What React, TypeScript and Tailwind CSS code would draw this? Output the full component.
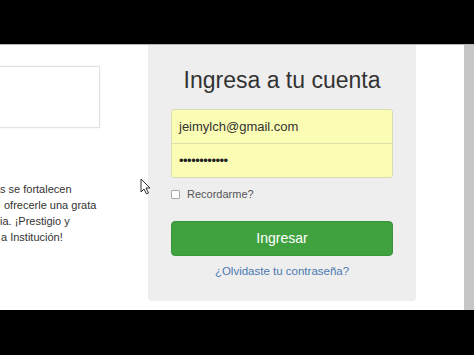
export default function App() {
  const font = { fontFamily: '"Liberation Sans", Arial, sans-serif' };
  return (
    <div className="w-[474px] h-[355px] bg-black flex flex-col overflow-hidden" style={font}>
      <div className="h-[44px] shrink-0" />
      <div className="relative h-[266px] shrink-0 bg-white border-t border-[#b5b5b5] flex">
        {/* left column, cut off by the video frame */}
        <div className="w-[148px] shrink-0 flex flex-col">
          <div className="mt-[21px] h-[62px] w-[101px] -ml-px border border-[#e2e2e2] shadow-[0_0_2px_rgba(0,0,0,0.08)]" />
          <div className="mt-[53px] text-[11px] leading-[16px] text-[#333] flex flex-col">
            <span className="pl-0">s se fortalecen</span>
            <span className="pl-[4px]">ofrecerle una grata</span>
            <span className="pl-0">ia. ¡Prestigio y</span>
            <span className="pl-px">a Institución!</span>
          </div>
        </div>

        {/* login panel */}
        <div className="w-[268px] h-[256px] shrink-0 bg-[#eeeeee] rounded-b-[4px] px-[23px] pt-[21px] flex flex-col">
          <h2 className="text-center text-[23px] leading-[28px] text-[#333]">Ingresa a tu cuenta</h2>
          <div className="mt-[15px] flex flex-col rounded-[3px] border border-[#d9dcb0] overflow-hidden">
            <div className="h-[34px] bg-[#fbfdb4] flex items-center px-[7px] text-[13px] text-[#333] border-b border-[#dedfae]">
              jeimylch@gmail.com
            </div>
            <div className="h-[33px] bg-[#fbfdb4] flex items-center px-[7px] text-[13px] text-[#222] tracking-[-0.5px]">
              ••••••••••••
            </div>
          </div>
          <label className="mt-[8px] flex items-center gap-[7px] text-[11px] text-[#555]">
            <span className="w-[9px] h-[9px] border border-[#aaa] bg-white rounded-[1px]" />
            Recordarme?
          </label>
          <button className="mt-[18px] h-[35px] rounded-[4px] bg-[#3fa23f] border border-[#3a943a] text-white text-[14px]">
            Ingresar
          </button>
          <a className="mt-[7px] text-center text-[11.5px] text-[#4a78b0]">¿Olvidaste tu contraseña?</a>
        </div>

        <div className="flex-1" />
        <div className="w-[10px] shrink-0 bg-[#c6c6c6]" />

        {/* mouse cursor */}
        <svg className="absolute left-[140px] top-[133px]" width="11" height="17" viewBox="0 0 11 17">
          <path d="M1 1 L1 14 L4 11 L6.5 16 L8.5 15 L6 10 L10 10 Z" fill="#fff" stroke="#333" strokeWidth="1" strokeLinejoin="round" />
        </svg>
      </div>
      <div className="flex-1" />
    </div>
  );
}
